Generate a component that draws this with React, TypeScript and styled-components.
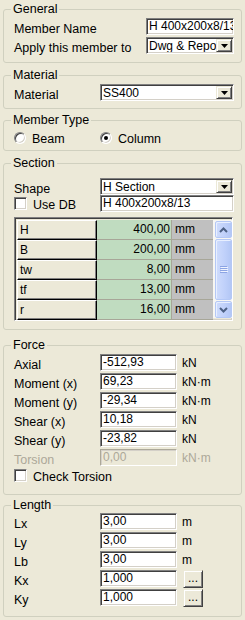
import React from 'react'
import { styled, createGlobalStyle, css } from 'styled-components'

const GlobalStyle = createGlobalStyle`
html, body {
  margin: 0;
  padding: 0;
  background: #ECE9D8;
}
body {
  font-family: "Liberation Sans", Arial, sans-serif;
  font-size: 12.5px;
  color: #000;
}
`

const sunken = css`
box-sizing: border-box;
border: 1px solid;
border-color: #808080 #ffffff #ffffff #808080;
box-shadow: inset 1px 1px 0 #404040, inset -1px -1px 0 #D4D0C8;
`

const raised = css`
box-sizing: border-box;
border: 1px solid;
border-color: #ECE9D8 #404040 #404040 #ECE9D8;
box-shadow: inset 1px 1px 0 #ffffff, inset -1px -1px 0 #808080;
background: #ECE9D8;
`

const sectionRows = [
    { name: 'H', value: '400,00' },
    { name: 'B', value: '200,00' },
    { name: 'tw', value: '8,00' },
    { name: 'tf', value: '13,00' },
    { name: 'r', value: '16,00' },
]

const forceRows = [
    { label: 'Axial', value: '-512,93', unit: 'kN' },
    { label: 'Moment (x)', value: '69,23', unit: 'kN·m' },
    { label: 'Moment (y)', value: '-29,34', unit: 'kN·m' },
    { label: 'Shear (x)', value: '10,18', unit: 'kN' },
    { label: 'Shear (y)', value: '-23,82', unit: 'kN' },
]

const lengthRows = [
    { label: 'Lx', value: '3,00', unit: 'm' },
    { label: 'Ly', value: '3,00', unit: 'm' },
    { label: 'Lb', value: '3,00', unit: 'm' },
    { label: 'Kx', value: '1,000' },
    { label: 'Ky', value: '1,000' },
]

const Combo = ({ text, width }: { text: string, width: number }) => (
    <ComboBox $w={width}>
        <ComboText>{text}</ComboText>
        <DropButton>
            <svg width="7" height="4" viewBox="0 0 7 4">
                <path d="M0 0h7L3.5 4z" fill="#000" />
            </svg>
        </DropButton>
    </ComboBox>
)

const App = () => {
    return (
        <>
            <GlobalStyle />
            <Page>
                <Group $h={62} $mt={1}>
                    <Legend>General</Legend>
                    <Body $pt={1} $gap={2}>
                        <Row $between>
                            <Label>Member Name</Label>
                            <Edit $w={88}>H 400x200x8/13</Edit>
                        </Row>
                        <Row $between>
                            <Label>Apply this member to</Label>
                            <Combo text="Dwg & Report" width={88} />
                        </Row>
                    </Body>
                </Group>

                <Group $h={42} $mt={4}>
                    <Legend>Material</Legend>
                    <Body $pt={1} $gap={2}>
                        <Row $between>
                            <Label>Material</Label>
                            <Combo text="SS400" width={134} />
                        </Row>
                    </Body>
                </Group>

                <Group $h={39} $mt={3}>
                    <Legend>Member Type</Legend>
                    <Body $pt={1} $gap={2}>
                        <Row>
                            <Choice $w={86}>
                                <Radio />
                                <span>Beam</span>
                            </Choice>
                            <Choice>
                                <Radio $on />
                                <span>Column</span>
                            </Choice>
                        </Row>
                    </Body>
                </Group>

                <Group $h={175} $mt={4}>
                    <Legend>Section</Legend>
                    <Body $pt={7} $gap={0}>
                        <Row $between>
                            <Label>Shape</Label>
                            <Combo text="H Section" width={134} />
                        </Row>
                        <Row $between>
                            <Choice>
                                <Check />
                                <span>Use DB</span>
                            </Choice>
                            <Edit $w={134}>H 400x200x8/13</Edit>
                        </Row>
                        <Grid>
                            <Table>
                                {sectionRows.map((r) => (
                                    <GridRow key={r.name}>
                                        <NameCell>{r.name}</NameCell>
                                        <ValueCell>{r.value}</ValueCell>
                                        <UnitCell>mm</UnitCell>
                                    </GridRow>
                                ))}
                            </Table>
                            <ScrollBar>
                                <ScrollButton>
                                    <svg width="9" height="6" viewBox="0 0 9 6">
                                        <path d="M1 5L4.5 1.5L8 5" fill="none" stroke="#4D6185" strokeWidth="2" />
                                    </svg>
                                </ScrollButton>
                                <Thumb>
                                    <svg width="8" height="7" viewBox="0 0 8 7">
                                        <path d="M0 .5h7M0 2.5h7M0 4.5h7M0 6.5h7" stroke="#8CA4E3" />
                                        <path d="M1 1.5h7M1 3.5h7M1 5.5h7" stroke="#EEF3FF" />
                                    </svg>
                                </Thumb>
                                <ScrollButton>
                                    <svg width="9" height="6" viewBox="0 0 9 6">
                                        <path d="M1 1L4.5 4.5L8 1" fill="none" stroke="#4D6185" strokeWidth="2" />
                                    </svg>
                                </ScrollButton>
                            </ScrollBar>
                        </Grid>
                    </Body>
                </Group>

                <Group $h={158} $mt={7}>
                    <Legend>Force</Legend>
                    <Body $pt={1} $gap={2}>
                        {forceRows.map((r) => (
                            <Row key={r.label}>
                                <Label $w={86}>{r.label}</Label>
                                <Edit $w={77}>{r.value}</Edit>
                                <Unit>{r.unit}</Unit>
                            </Row>
                        ))}
                        <Row>
                            <Label $w={86} $off>Torsion</Label>
                            <Edit $w={77} $off>0,00</Edit>
                            <Unit $off>kN·m</Unit>
                        </Row>
                        <CheckRow>
                            <Choice>
                                <Check />
                                <span>Check Torsion</span>
                            </Choice>
                        </CheckRow>
                    </Body>
                </Group>

                <Group $h={120} $mt={2}>
                    <Legend>Length</Legend>
                    <Body $pt={0} $gap={2}>
                        {lengthRows.map((r) => (
                            <Row key={r.label}>
                                <Label $w={86}>{r.label}</Label>
                                <Edit $w={77}>{r.value}</Edit>
                                {r.unit ? <Unit>{r.unit}</Unit> : <DotsButton>...</DotsButton>}
                            </Row>
                        ))}
                    </Body>
                </Group>
            </Page>
        </>
    )
}

export default App

const Page = styled.div`
width: 245px;
box-sizing: border-box;
padding: 0 3px;
display: flex;
flex-direction: column;
`

const Group = styled.fieldset<{ $h: number, $mt: number }>`
margin: ${p => p.$mt}px 0 0;
padding: 0 7px 0 10px;
height: ${p => p.$h}px;
box-sizing: border-box;
border: 1px solid #D0D0BF;
border-radius: 3px;
min-width: 0;
`

const Legend = styled.legend`
padding: 0 2px;
margin-left: -3px;
line-height: 16px;
font-size: 12.5px;
`

const Body = styled.div<{ $pt: number, $gap: number }>`
display: flex;
flex-direction: column;
gap: ${p => p.$gap}px;
padding-top: ${p => p.$pt}px;
`

const Row = styled.div<{ $between?: boolean }>`
display: flex;
align-items: center;
justify-content: ${p => p.$between ? 'space-between' : 'flex-start'};
height: 17px;
`

const CheckRow = styled.div`
display: flex;
align-items: center;
height: 17px;
margin-top: -1px;
`

const Label = styled.div<{ $w?: number, $off?: boolean }>`
width: ${p => p.$w ? `${p.$w}px` : 'auto'};
padding-top: 4px;
white-space: nowrap;
color: ${p => p.$off ? '#ACA899' : '#000'};
`

const Unit = styled.div<{ $off?: boolean }>`
margin-left: 5px;
padding-top: 1px;
font-size: 12px;
color: ${p => p.$off ? '#ACA899' : '#000'};
`

const Edit = styled.div<{ $w: number, $off?: boolean }>`
${sunken};
width: ${p => p.$w}px;
height: 17px;
padding: 0 2px;
line-height: 14px;
font-size: 12px;
white-space: nowrap;
overflow: hidden;
background: ${p => p.$off ? '#ECE9D8' : '#fff'};
color: ${p => p.$off ? '#ACA899' : '#000'};
${p => p.$off && css`
border-color: #ACA899 #fff #fff #ACA899;
box-shadow: inset 1px 1px 0 #D4D0C8;
`}
`

const ComboBox = styled.div<{ $w: number }>`
${sunken};
width: ${p => p.$w}px;
height: 17px;
padding: 1px;
display: flex;
background: #fff;
`

const ComboText = styled.div`
flex: 1;
min-width: 0;
padding-left: 1px;
line-height: 14px;
font-size: 12px;
white-space: nowrap;
overflow: hidden;
`

const DropButton = styled.div`
${raised};
width: 16px;
height: 13px;
display: flex;
align-items: center;
justify-content: center;
flex-shrink: 0;
`

const Choice = styled.div<{ $w?: number }>`
display: flex;
align-items: center;
gap: 6px;
width: ${p => p.$w ? `${p.$w}px` : 'auto'};
white-space: nowrap;
& > span {
  padding-top: 2px;
}
`

const Radio = styled.div<{ $on?: boolean }>`
position: relative;
width: 12px;
height: 12px;
box-sizing: border-box;
border-radius: 50%;
border: 1px solid;
border-color: #808080 #fff #fff #808080;
box-shadow: inset 1px 1px 0 #404040, inset -1px -1px 0 #D4D0C8;
background: #fff;
flex-shrink: 0;
&::after {
  content: "";
  display: ${p => p.$on ? 'block' : 'none'};
  position: absolute;
  left: 3px;
  top: 3px;
  width: 4px;
  height: 4px;
  border-radius: 50%;
  background: #000;
}
`

const Check = styled.div`
${sunken};
width: 13px;
height: 13px;
background: #fff;
flex-shrink: 0;
`

const Grid = styled.div`
${sunken};
width: 219px;
height: 104px;
margin-top: 5px;
padding: 2px;
display: flex;
background: #ECE9D8;
`

const Table = styled.div`
display: flex;
flex-direction: column;
width: 196px;
`

const GridRow = styled.div`
display: grid;
grid-template-columns: 80px 75px 41px;
height: 20px;
font-size: 12px;
`

const NameCell = styled.div`
box-sizing: border-box;
border: 1px solid;
border-color: #fff #000 #000 #fff;
box-shadow: inset -1px -1px 0 #808080;
background: #ECE9D8;
padding-left: 2px;
line-height: 18px;
`

const ValueCell = styled.div`
box-sizing: border-box;
background: #C0DCC0;
border-bottom: 1px solid #A7A698;
border-right: 1px solid #A7A698;
text-align: right;
padding-right: 1px;
line-height: 19px;
`

const UnitCell = styled.div`
box-sizing: border-box;
background: #C0C0C0;
border-bottom: 1px solid #A7A698;
padding-left: 3px;
line-height: 19px;
`

const ScrollBar = styled.div`
width: 19px;
box-sizing: border-box;
padding: 1px 0 0 2px;
display: flex;
flex-direction: column;
gap: 1px;
background: #F7F6F2;
`

const scrollPart = css`
box-sizing: border-box;
width: 17px;
border: 1px solid #B4C8F6;
border-radius: 2px;
background: linear-gradient(to right, #CFDCFC, #BFD0FA 60%, #B3C7F5);
box-shadow: inset 1px 1px 0 #E8EFFF;
display: flex;
align-items: center;
justify-content: center;
`

const ScrollButton = styled.div`
${scrollPart};
height: 17px;
`

const Thumb = styled.div`
${scrollPart};
flex: 1;
`

const DotsButton = styled.div`
${raised};
width: 20px;
height: 18px;
margin-left: 6px;
font-size: 12px;
line-height: 14px;
text-align: center;
`
